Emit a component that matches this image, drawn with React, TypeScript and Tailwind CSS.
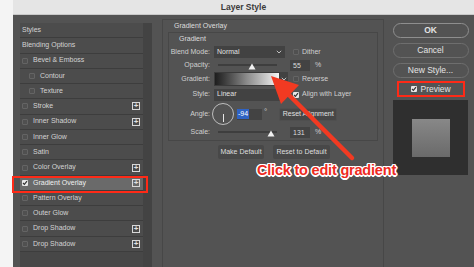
import React from "react";

const font = { fontFamily: '"Liberation Sans", Arial, sans-serif' };

type Row = { label: string; check?: boolean; indent?: boolean; plus?: boolean; active?: boolean };

const rows: Row[] = [
  { label: "Styles" },
  { label: "Blending Options" },
  { label: "Bevel & Emboss", check: true },
  { label: "Contour", check: true, indent: true },
  { label: "Texture", check: true, indent: true },
  { label: "Stroke", check: true, plus: true },
  { label: "Inner Shadow", check: true, plus: true },
  { label: "Inner Glow", check: true },
  { label: "Satin", check: true },
  { label: "Color Overlay", check: true, plus: true },
  { label: "Gradient Overlay", check: true, plus: true, active: true },
  { label: "Pattern Overlay", check: true },
  { label: "Outer Glow", check: true },
  { label: "Drop Shadow", check: true, plus: true },
  { label: "Drop Shadow", check: true, plus: true },
];

const Box = ({ on = false }: { on?: boolean }) => (
  <span
    className={`w-[6px] h-[6px] shrink-0 rounded-[1px] flex items-center justify-center ${
      on ? "bg-[#e8e8e8]" : "bg-[#505050] border border-[#646464]"
    }`}
  >
    {on && (
      <svg width="6" height="6" viewBox="0 0 6 6">
        <path d="M1 3l1.4 1.4L5 1.2" fill="none" stroke="#333" strokeWidth="1.2" />
      </svg>
    )}
  </span>
);

const Plus = () => (
  <span className="w-[8px] h-[8px] border border-[#d8d8d8] flex items-center justify-center text-[#e0e0e0] text-[8px] leading-none font-bold">
    +
  </span>
);

const Chevron = () => (
  <svg width="6" height="4" viewBox="0 0 6 4">
    <path d="M0.8 0.8L3 3L5.2 0.8" fill="none" stroke="#cfcfcf" strokeWidth="0.9" />
  </svg>
);

const Slider = ({ pos }: { pos: number }) => (
  <div className="relative w-[71px] h-full flex items-center">
    <div className="ml-[4px] w-[59px] h-[2px] bg-[#3e3e3e]" />
    <svg className="absolute top-[4px]" style={{ left: pos }} width="8" height="7" viewBox="0 0 8 7">
      <path d="M4 0.5L7.5 6.5H0.5Z" fill="#f0f0f0" />
    </svg>
  </div>
);

const Field = ({ value }: { value: string }) => (
  <div className="w-[20px] h-[11px] bg-[#434343] text-[#dcdcdc] text-[7px] leading-[11px] pl-[3px]">{value}</div>
);

export default function App() {
  return (
    <div className="relative w-[474px] h-[267px] flex bg-white overflow-hidden" style={font}>
      <div className="w-[13px] shrink-0 bg-[#f4f4f4]" />
      <div className="flex-1 flex flex-col bg-[#535353]">
        {/* title bar */}
        <div className="h-[15px] shrink-0 bg-[#e5e5e5] border-b border-[#c9c9c9] flex items-center justify-center text-[8.5px] font-bold text-[#3a3a3a]">
          Layer Style
        </div>

        <div className="flex-1 flex pl-[7px]">
          {/* styles list */}
          <div className="mt-[8px] w-[132px] bg-[#474747] flex">
            <div className="w-[123px] flex flex-col">
              {rows.map((r, i) => (
                <div
                  key={i}
                  className={`h-[15.27px] flex items-center gap-[5px] border-b border-[#3d3d3d] pr-[3px] text-[7px] ${
                    r.active ? "bg-[#6a6a6a] text-[#f0f0f0]" : "bg-[#4c4c4c] text-[#d3d3d3]"
                  } ${r.indent ? "pl-[9px]" : "pl-[2px]"}`}
                >
                  {r.check && <Box on={r.active} />}
                  <span className="flex-1">{r.label}</span>
                  {r.plus && <Plus />}
                </div>
              ))}
            </div>
            <div className="flex-1 bg-[#434343]" />
          </div>

          {/* settings group */}
          <div className="ml-[10px] mt-[4px] w-[222px] border-l border-t border-r border-[#474747] flex flex-col text-[#d0d0d0] text-[7px]">
            <div className="pl-[11px] h-[12px] flex items-center text-[#dedede]">Gradient Overlay</div>
            <div className="ml-[5px] mr-[5px] border border-[#474747] flex flex-col pb-[2px]">
              <div className="h-[12px] pl-[10px] flex items-center text-[#dedede]">Gradient</div>
              {/* blend mode */}
              <div className="h-[14px] flex items-center">
                <span className="w-[41px] text-right">Blend Mode:</span>
                <div className="ml-[4px] w-[71px] h-[12px] bg-[#424242] flex items-center justify-between px-[3px] text-[#e0e0e0]">
                  Normal <Chevron />
                </div>
                <span className="ml-[8px]"><Box /></span>
                <span className="ml-[3px]">Dither</span>
              </div>
              {/* opacity */}
              <div className="h-[12px] flex items-center">
                <span className="w-[41px] text-right">Opacity:</span>
                <div className="ml-[4px] h-full"><Slider pos={34} /></div>
                <span className="ml-[5px]"><Field value="55" /></span>
                <span className="ml-[5px]">%</span>
              </div>
              {/* gradient */}
              <div className="h-[16px] flex items-center">
                <span className="w-[41px] text-right">Gradient:</span>
                <div className="ml-[4px] w-[66px] h-[14px] bg-gradient-to-r from-[#1e1e1e] via-[#8c8c8c] to-[#f6f6f6] border border-[#3a3a3a]" />
                <div className="w-[8px] h-[14px] bg-[#424242] flex items-center justify-center"><Chevron /></div>
                <span className="ml-[5px]"><Box /></span>
                <span className="ml-[3px]">Reverse</span>
              </div>
              {/* style */}
              <div className="h-[15px] flex items-center">
                <span className="w-[41px] text-right">Style:</span>
                <div className="ml-[4px] w-[66px] h-[12px] bg-[#424242] flex items-center px-[3px] text-[#e0e0e0]">Linear</div>
                <span className="ml-[13px]"><Box on /></span>
                <span className="ml-[3px]">Align with Layer</span>
              </div>
              {/* angle */}
              <div className="h-[24px] flex items-center">
                <span className="w-[41px] text-right">Angle:</span>
                <div className="ml-[2px] w-[22px] h-[22px] rounded-full border border-[#bdbdbd] relative">
                  <div className="absolute left-[10px] top-[10px] w-[1px] h-[8px] bg-[#e6e6e6]" />
                </div>
                <div className="ml-[3px] w-[25px] h-[11px] bg-[#434343] flex items-center">
                  <span className="bg-[#2f63c4] text-white px-[1px] leading-[10px]">-94</span>
                </div>
                <span className="ml-[2px] text-[8px] leading-none -mt-[4px]">°</span>
                <div className="ml-[12px] w-[58px] h-[13px] bg-[#474747] border border-[#4f4f4f] rounded-[2px] flex items-center justify-center text-[#e0e0e0]">
                  Reset Alignment
                </div>
              </div>
              {/* scale */}
              <div className="h-[12px] flex items-center">
                <span className="w-[41px] text-right">Scale:</span>
                <div className="ml-[4px] h-full"><Slider pos={53} /></div>
                <span className="ml-[5px]"><Field value="131" /></span>
                <span className="ml-[5px]">%</span>
              </div>
            </div>
            <div className="mt-[4px] pl-[55px] flex gap-[9px] text-[#dedede]">
              <div className="w-[46px] h-[14px] bg-[#484848] rounded-[2px] flex items-center justify-center">Make Default</div>
              <div className="w-[57px] h-[14px] bg-[#484848] rounded-[2px] flex items-center justify-center">Reset to Default</div>
            </div>
          </div>

          {/* right column */}
          <div className="flex-1 flex flex-col items-center pt-[8px] pl-[3px] gap-[5px] text-[8.5px] text-[#e4e4e4]">
            <div className="w-[76px] h-[15px] rounded-full border border-[#8e8e8e] flex items-center justify-center font-bold">OK</div>
            <div className="w-[76px] h-[15px] rounded-full border border-[#6e6e6e] flex items-center justify-center">Cancel</div>
            <div className="w-[76px] h-[15px] rounded-full border border-[#6e6e6e] flex items-center justify-center">New Style...</div>
            <div className="w-[68px] h-[16px] -mt-[2px] border-2 border-[#ff2a17] flex items-center pl-[12px] gap-[4px]">
              <Box on />
              <span>Preview</span>
            </div>
            <div className="w-[75px] h-[75px] -mt-[2px] bg-[#2f2f2f] flex items-center justify-center">
              <div className="w-[38px] h-[38px] bg-gradient-to-b from-[#888888] to-[#6a6a6a]" />
            </div>
          </div>
        </div>
      </div>

      {/* annotation: highlight around Gradient Overlay row */}
      <div className="absolute left-[12px] top-[176px] w-[136px] h-[17px] border-2 border-[#ff2a17]" />

      <svg className="absolute left-0 top-0" width="474" height="267" viewBox="0 0 474 267">
        <line x1="287" y1="93" x2="352" y2="158" stroke="#f23a22" strokeWidth="4.5" strokeLinecap="round" />
        <path d="M271 76L299 85L281 104Z" fill="#f23a22" />
      </svg>

      <div
        className="absolute left-[257px] top-[163px] text-[14.5px] font-bold text-[#ee2a1e] leading-none tracking-[-0.2px]"
        style={{
          ...font,
          textShadow:
            "1.5px 0 #fff, -1.5px 0 #fff, 0 1.5px #fff, 0 -1.5px #fff, 1px 1px #fff, -1px -1px #fff, 1px -1px #fff, -1px 1px #fff",
        }}
      >
        Click to edit gradient
      </div>
    </div>
  );
}
